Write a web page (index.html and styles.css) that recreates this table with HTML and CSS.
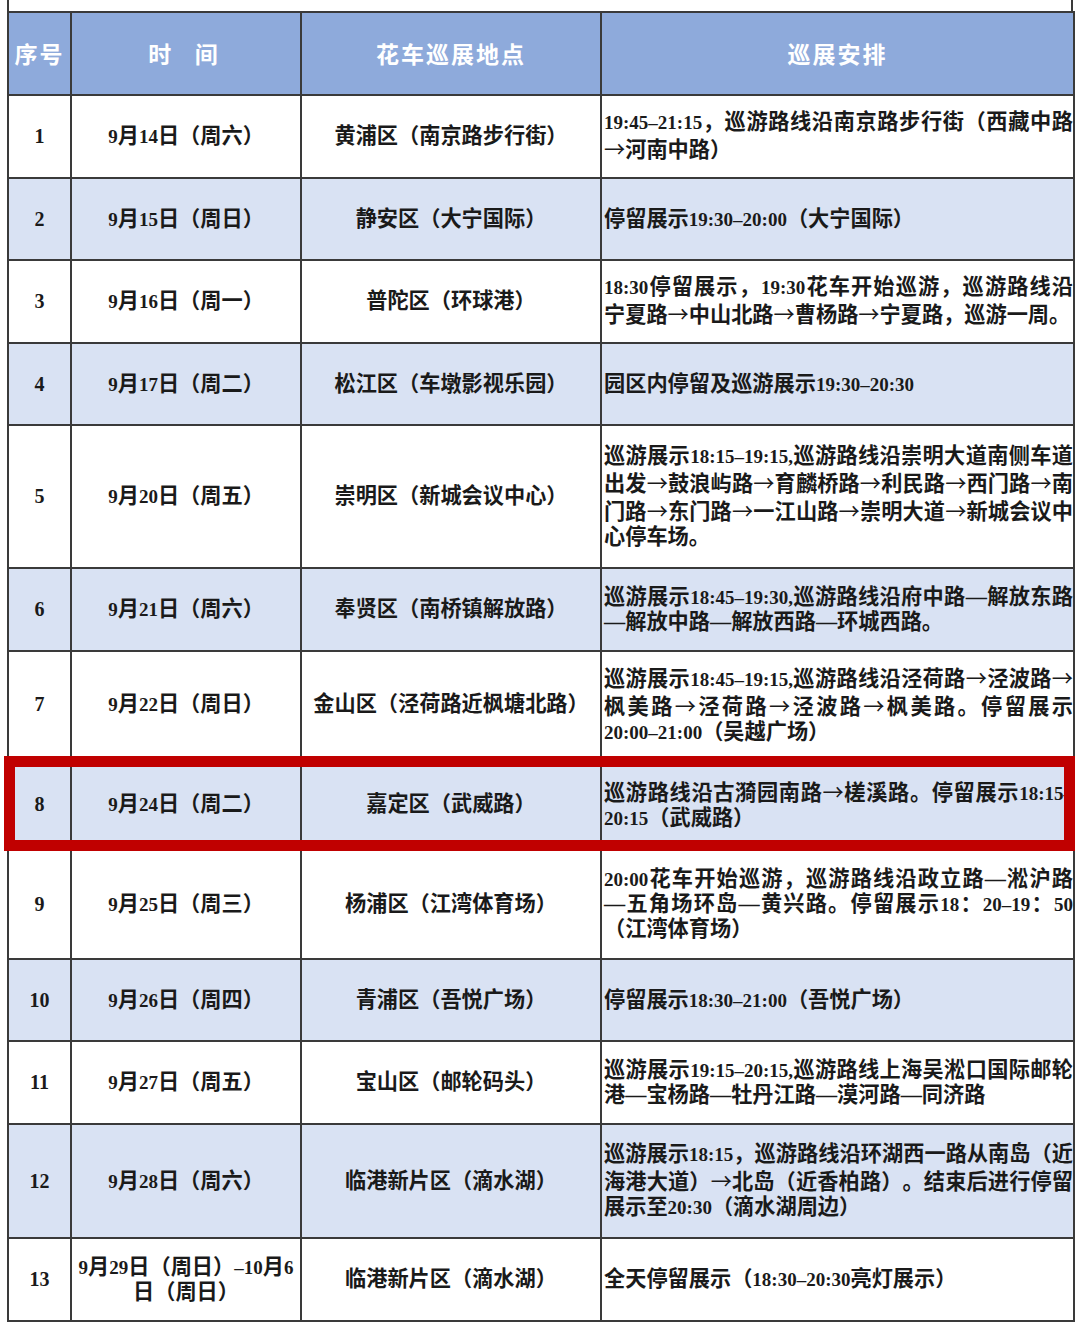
FILE: index.html
```html
<!DOCTYPE html>
<html lang="zh-CN">
<head>
<meta charset="utf-8">
<title>花车巡展安排</title>
<link rel="stylesheet" href="styles.css">
</head>
<body>
<div class="page">
  <div class="top-strip"></div>
  <table class="schedule">
    <colgroup>
      <col class="c-no"><col class="c-time"><col class="c-place"><col class="c-plan">
    </colgroup>
    <thead>
      <tr class="head">
        <th>序号</th>
        <th class="spaced">时&ensp;间</th>
        <th>花车巡展地点</th>
        <th>巡展安排</th>
      </tr>
    </thead>
    <tbody>
      <tr class="r-a"><td class="no">1</td><td><span class="n">9</span>月<span class="n">14</span>日（周六）</td><td>黄浦区（南京路步行街）</td><td class="plan"><span class="n">19:45–21:15</span>，巡游路线沿南京路步行街（西藏中路<span class="ar">→</span>河南中路）</td></tr>
      <tr class="r-b alt"><td class="no">2</td><td><span class="n">9</span>月<span class="n">15</span>日（周日）</td><td>静安区（大宁国际）</td><td class="plan">停留展示<span class="n">19:30–20:00</span>（大宁国际）</td></tr>
      <tr class="r-a"><td class="no">3</td><td><span class="n">9</span>月<span class="n">16</span>日（周一）</td><td>普陀区（环球港）</td><td class="plan"><span class="n">18:30</span>停留展示，<span class="n">19:30</span>花车开始巡游，巡游路线沿宁夏路<span class="ar">→</span>中山北路<span class="ar">→</span>曹杨路<span class="ar">→</span>宁夏路，巡游一周。</td></tr>
      <tr class="r-b alt"><td class="no">4</td><td><span class="n">9</span>月<span class="n">17</span>日（周二）</td><td>松江区（车墩影视乐园）</td><td class="plan">园区内停留及巡游展示<span class="n">19:30–20:30</span></td></tr>
      <tr class="r-5"><td class="no">5</td><td><span class="n">9</span>月<span class="n">20</span>日（周五）</td><td>崇明区（新城会议中心）</td><td class="plan">巡游展示<span class="n">18:15–19:15,</span>巡游路线沿崇明大道南侧车道出发<span class="ar">→</span>鼓浪屿路<span class="ar">→</span>育麟桥路<span class="ar">→</span>利民路<span class="ar">→</span>西门路<span class="ar">→</span>南门路<span class="ar">→</span>东门路<span class="ar">→</span>一江山路<span class="ar">→</span>崇明大道<span class="ar">→</span>新城会议中心停车场。</td></tr>
      <tr class="r-a alt"><td class="no">6</td><td><span class="n">9</span>月<span class="n">21</span>日（周六）</td><td>奉贤区（南桥镇解放路）</td><td class="plan">巡游展示<span class="n">18:45–19:30,</span>巡游路线沿府中路—解放东路—解放中路—解放西路—环城西路。</td></tr>
      <tr class="r-7"><td class="no">7</td><td><span class="n">9</span>月<span class="n">22</span>日（周日）</td><td>金山区（泾荷路近枫塘北路）</td><td class="plan">巡游展示<span class="n">18:45–19:15,</span>巡游路线沿泾荷路<span class="ar">→</span>泾波路<span class="ar">→</span>枫美路<span class="ar">→</span>泾荷路<span class="ar">→</span>泾波路<span class="ar">→</span>枫美路。停留展示<span class="n">20:00–21:00</span>（吴越广场）</td></tr>
      <tr class="r-8 alt"><td class="no mark">8</td><td><span class="n">9</span>月<span class="n">24</span>日（周二）</td><td>嘉定区（武威路）</td><td class="plan">巡游路线沿古漪园南路<span class="ar">→</span>槎溪路。停留展示<span class="n">18:15–20:15</span>（武威路）</td></tr>
      <tr class="r-9"><td class="no">9</td><td><span class="n">9</span>月<span class="n">25</span>日（周三）</td><td>杨浦区（江湾体育场）</td><td class="plan"><span class="n">20:00</span>花车开始巡游，巡游路线沿政立路—淞沪路<span class="nw">—五</span>角场环岛—黄兴路。停留展示<span class="n">18</span>：<span class="n">20–19</span>：<span class="n">50</span>（江湾体育场）</td></tr>
      <tr class="r-b alt"><td class="no">10</td><td><span class="n">9</span>月<span class="n">26</span>日（周四）</td><td>青浦区（吾悦广场）</td><td class="plan">停留展示<span class="n">18:30–21:00</span>（吾悦广场）</td></tr>
      <tr class="r-a"><td class="no">11</td><td><span class="n">9</span>月<span class="n">27</span>日（周五）</td><td>宝山区（邮轮码头）</td><td class="plan">巡游展示<span class="n">19:15–20:15,</span>巡游路线上海吴淞口国际邮轮港—宝杨路—牡丹江路—漠河路—同济路</td></tr>
      <tr class="r-12 alt"><td class="no">12</td><td><span class="n">9</span>月<span class="n">28</span>日（周六）</td><td>临港新片区（滴水湖）</td><td class="plan">巡游展示<span class="n">18:15</span>，巡游路线沿环湖西一路从南岛（近海港大道）<span class="ar">→</span>北岛（近香柏路）。结束后进行停留展示至<span class="n">20:30</span>（滴水湖周边）</td></tr>
      <tr class="r-a"><td class="no">13</td><td class="tight"><span class="n">9</span>月<span class="n">29</span>日（周日）<span class="n">–10</span>月<span class="n">6</span>日（周日）</td><td>临港新片区（滴水湖）</td><td class="plan">全天停留展示（<span class="n">18:30–20:30</span>亮灯展示）</td></tr>
    </tbody>
  </table>
</div>
</body>
</html>
```

FILE: styles.css
```css
html, body {
  margin: 0;
  padding: 0;
  background: #ffffff;
}

.page {
  width: 1080px;
  padding-left: 7px;
  box-sizing: border-box;
}

.top-strip {
  width: 1066px;
  height: 11px;
  box-sizing: border-box;
  border-left: 2px solid #3a3a3a;
  border-right: 2px solid #3a3a3a;
}

.schedule {
  width: 1066px;
  table-layout: fixed;
  border-collapse: collapse;
  font-family: "Liberation Serif", "Noto Sans CJK SC", serif;
  font-weight: 700;
  font-size: 21.2px;
  line-height: 25px;
  color: #1a1a1a;
  text-spacing-trim: space-all;
}

.c-no { width: 63px; }
.c-time { width: 230px; }
.c-place { width: 300px; }
.c-plan { width: 473px; }

.schedule th,
.schedule td {
  border: 2px solid #3a3a3a;
  padding: 0 3px;
  text-align: center;
  vertical-align: middle;
}

.schedule th {
  background: #8eaadb;
  color: #ffffff;
  font-family: "Noto Sans CJK SC", "Noto Sans", sans-serif;
  font-weight: 700;
  font-size: 23px;
  letter-spacing: 2px;
}

.schedule th.spaced {
  letter-spacing: 6px;
}

.head { height: 83px; }
.r-a { height: 83px; }
.r-b { height: 82px; }
.r-5 { height: 143px; }
.r-7 { height: 107px; }
.r-8 { height: 92px; }
.r-9 { height: 109px; }
.r-12 { height: 114px; }

.alt td {
  background: #d9e2f3;
}

.n {
  font-size: 19px;
}

.nw {
  white-space: nowrap;
}

.ar {
  font-family: "Noto Sans CJK SC", sans-serif;
  font-weight: 400;
}

.schedule td.no {
  font-size: 20px;
  padding: 0 1px;
}

.schedule td.plan {
  text-align: justify;
  text-align-last: left;
  padding: 0 0 0 2px;
}

.schedule td.tight {
  padding: 0 1px;
  line-height: 24px;
}

.schedule td.mark {
  position: relative;
}

.schedule td.mark::after {
  content: "";
  position: absolute;
  left: -5px;
  top: -3px;
  bottom: -2px;
  width: 1071px;
  box-sizing: border-box;
  border: 11px solid #c00000;
  pointer-events: none;
}
```
